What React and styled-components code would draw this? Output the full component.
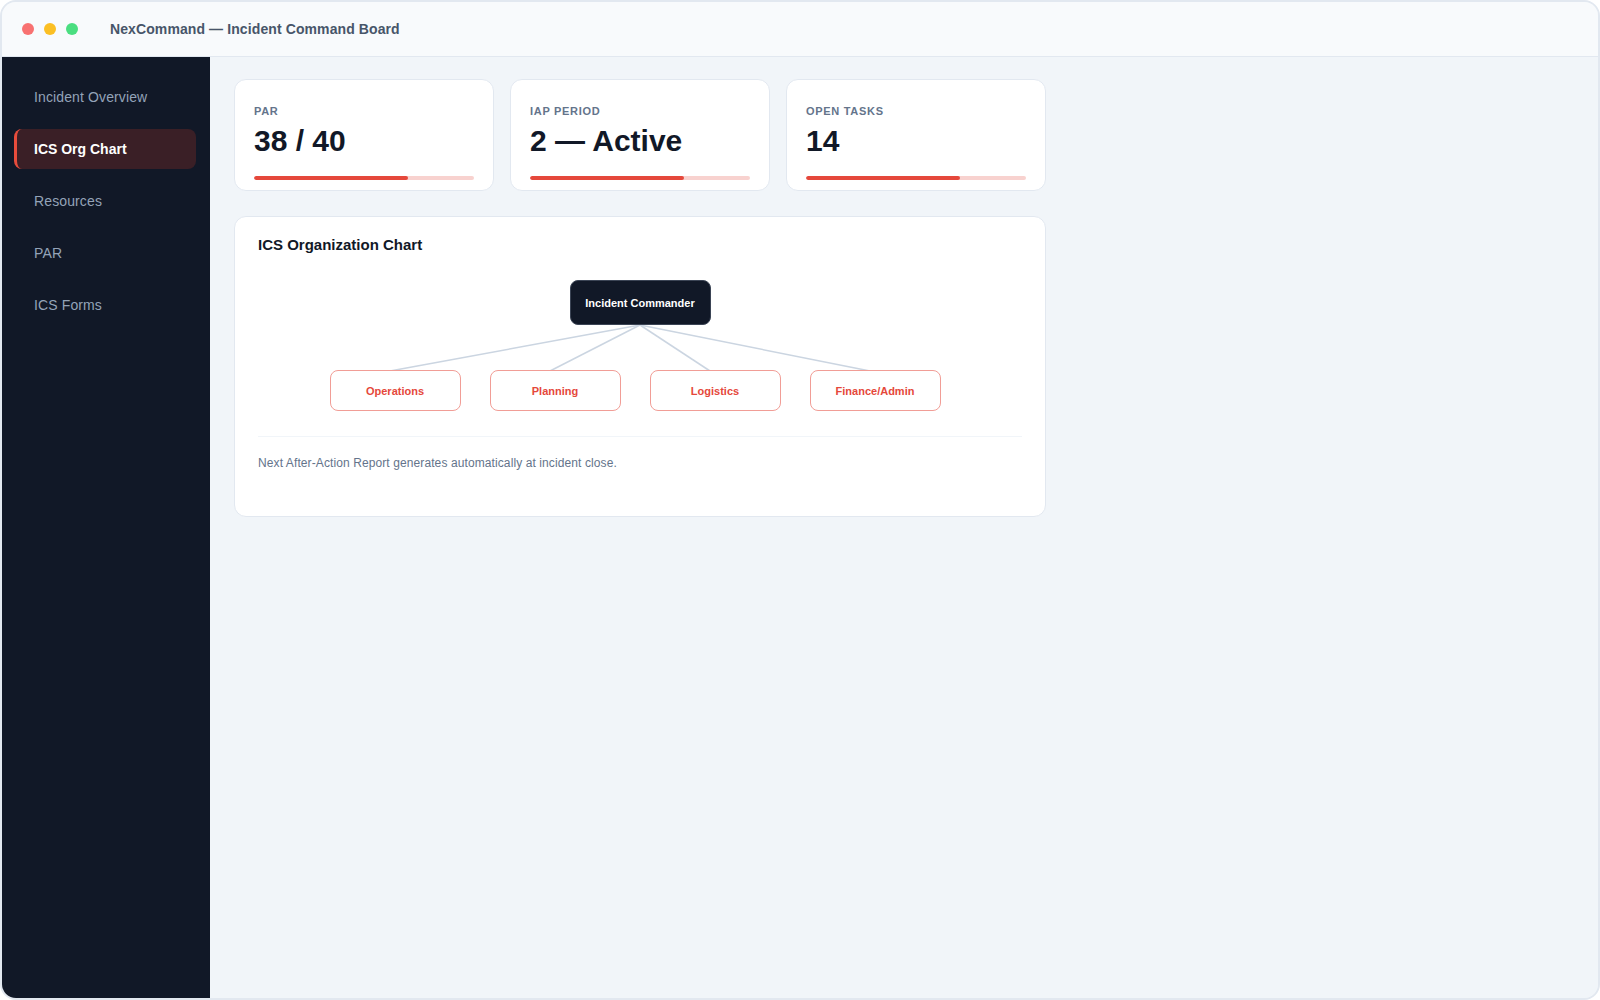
import React from "react";
import styled, { createGlobalStyle } from "styled-components";

const GlobalStyle = createGlobalStyle`
  html, body {
    margin: 0;
    padding: 0;
    background: #ffffff;
    font-family: "Liberation Sans", Arial, sans-serif;
  }
  * { box-sizing: border-box; }
`;

const navItems = ["Incident Overview", "ICS Org Chart", "Resources", "PAR", "ICS Forms"];

const stats = [
  { label: "PAR", value: "38 / 40", fill: 70 },
  { label: "IAP Period", value: "2 — Active", fill: 70 },
  { label: "Open Tasks", value: "14", fill: 70 },
];

const sections = ["Operations", "Planning", "Logistics", "Finance/Admin"];

function App() {
  return (
    <>
      <GlobalStyle />
      <Frame>
        <TitleBar>
          <Dots>
            <Dot color="#f87171" />
            <Dot color="#fbbf24" />
            <Dot color="#4ade80" />
          </Dots>
          <WindowTitle>NexCommand — Incident Command Board</WindowTitle>
        </TitleBar>
        <Body>
          <Sidebar>
            {navItems.map((item) => (
              <NavItem key={item} active={item === "ICS Org Chart"}>
                {item}
              </NavItem>
            ))}
          </Sidebar>
          <Main>
            <StatGrid>
              {stats.map((s) => (
                <StatCard key={s.label}>
                  <StatLabel>{s.label}</StatLabel>
                  <StatValue>{s.value}</StatValue>
                  <Track>
                    <Fill style={{ width: `${s.fill}%` }} />
                  </Track>
                </StatCard>
              ))}
            </StatGrid>

            <ChartCard>
              <CardTitle>ICS Organization Chart</CardTitle>
              <Chart>
                {/* connector lines sit behind the nodes */}
                <Lines width="764" height="131">
                  {[132, 292, 452, 612].map((x) => (
                    <line key={x} x1="382" y1="45" x2={x} y2="91" stroke="#cbd5e1" strokeWidth="1.5" />
                  ))}
                </Lines>
                <CommanderRow>
                  <Commander>Incident Commander</Commander>
                </CommanderRow>
                <SectionRow>
                  {sections.map((name) => (
                    <Section key={name}>{name}</Section>
                  ))}
                </SectionRow>
              </Chart>
              <Divider />
              <Footnote>Next After-Action Report generates automatically at incident close.</Footnote>
            </ChartCard>
          </Main>
        </Body>
      </Frame>
    </>
  );
}

const Frame = styled.div`
  width: 1600px;
  height: 1000px;
  border: 2px solid #e2e8f0;
  border-radius: 16px;
  overflow: hidden;
  display: flex;
  flex-direction: column;
  background: #f1f5f9;
`;
const TitleBar = styled.div`
  height: 55px;
  flex-shrink: 0;
  display: flex;
  align-items: center;
  padding-left: 20px;
  background: #f8fafc;
  border-bottom: 1px solid #e2e8f0;
`;
const Dots = styled.div`
  display: flex;
  gap: 10px;
  margin-right: 32px;
`;
const Dot = styled.span`
  width: 12px;
  height: 12px;
  border-radius: 50%;
  background: ${(p) => p.color};
`;
const WindowTitle = styled.div`
  font-size: 14px;
  font-weight: 700;
  color: #475569;
  letter-spacing: 0.1px;
`;
const Body = styled.div`
  flex: 1;
  display: flex;
  min-height: 0;
`;
const Sidebar = styled.nav`
  width: 208px;
  flex-shrink: 0;
  background: #111827;
  padding: 20px 14px 20px 12px;
  display: flex;
  flex-direction: column;
  gap: 12px;
`;
const NavItem = styled.div`
  height: 40px;
  display: flex;
  align-items: center;
  padding-left: 17px;
  border-left: 3px solid ${(p) => (p.active ? "#e74c3c" : "transparent")};
  border-radius: 8px;
  background: ${(p) => (p.active ? "#3a1f26" : "transparent")};
  color: ${(p) => (p.active ? "#ffffff" : "#94a3b8")};
  font-size: 14px;
  letter-spacing: ${(p) => (p.active ? "0" : "0.12px")};
  font-weight: ${(p) => (p.active ? 700 : 400)};
`;
const Main = styled.main`
  flex: 1;
  padding: 22px 24px;
  background: #f1f5f9;
`;
const StatGrid = styled.div`
  display: grid;
  grid-template-columns: repeat(3, 260px);
  gap: 16px;
`;
const StatCard = styled.div`
  height: 112px;
  background: #ffffff;
  border: 1px solid #e2e8f0;
  border-radius: 12px;
  padding: 23px 19px 0;
`;
const StatLabel = styled.div`
  font-size: 11px;
  line-height: 16px;
  font-weight: 700;
  letter-spacing: 0.7px;
  text-transform: uppercase;
  color: #64748b;
`;
const StatValue = styled.div`
  margin-top: 4px;
  font-size: 30px;
  line-height: 36px;
  font-weight: 700;
  color: #111827;
`;
const Track = styled.div`
  margin-top: 17px;
  height: 4px;
  border-radius: 2px;
  background: #f8d2cf;
  overflow: hidden;
`;
const Fill = styled.div`
  height: 100%;
  border-radius: 2px;
  background: #e5483b;
`;
const ChartCard = styled.section`
  margin-top: 25px;
  width: 812px;
  height: 301px;
  background: #ffffff;
  border: 1px solid #e2e8f0;
  border-radius: 12px;
  padding: 18px 23px 0;
`;
const CardTitle = styled.h3`
  margin: 0;
  font-size: 15px;
  line-height: 20px;
  font-weight: 700;
  color: #111827;
`;
const Chart = styled.div`
  position: relative;
  margin-top: 25px;
  height: 131px;
  display: flex;
  flex-direction: column;
  gap: 45px;
`;
const Lines = styled.svg`
  position: absolute;
  left: 0;
  top: 0;
`;
const CommanderRow = styled.div`
  display: flex;
  justify-content: center;
  position: relative;
`;
const Commander = styled.div`
  width: 141px;
  height: 45px;
  display: flex;
  align-items: center;
  justify-content: center;
  background: #111827;
  border: 1px solid #3b4455;
  border-radius: 8px;
  color: #ffffff;
  font-size: 11px;
  font-weight: 700;
`;
const SectionRow = styled.div`
  display: flex;
  justify-content: center;
  gap: 29px;
  padding-right: 10px;
  position: relative;
`;
const Section = styled.div`
  width: 131px;
  height: 41px;
  display: flex;
  align-items: center;
  justify-content: center;
  background: #ffffff;
  border: 1.5px solid #f19d96;
  border-radius: 8px;
  color: #e5483b;
  font-size: 11px;
  font-weight: 700;
`;
const Divider = styled.div`
  margin-top: 25px;
  height: 1px;
  background: #f1f5f9;
`;
const Footnote = styled.p`
  margin: 17px 0 0;
  font-size: 12px;
  line-height: 18px;
  letter-spacing: 0.1px;
  color: #64748b;
`;

export default App;
